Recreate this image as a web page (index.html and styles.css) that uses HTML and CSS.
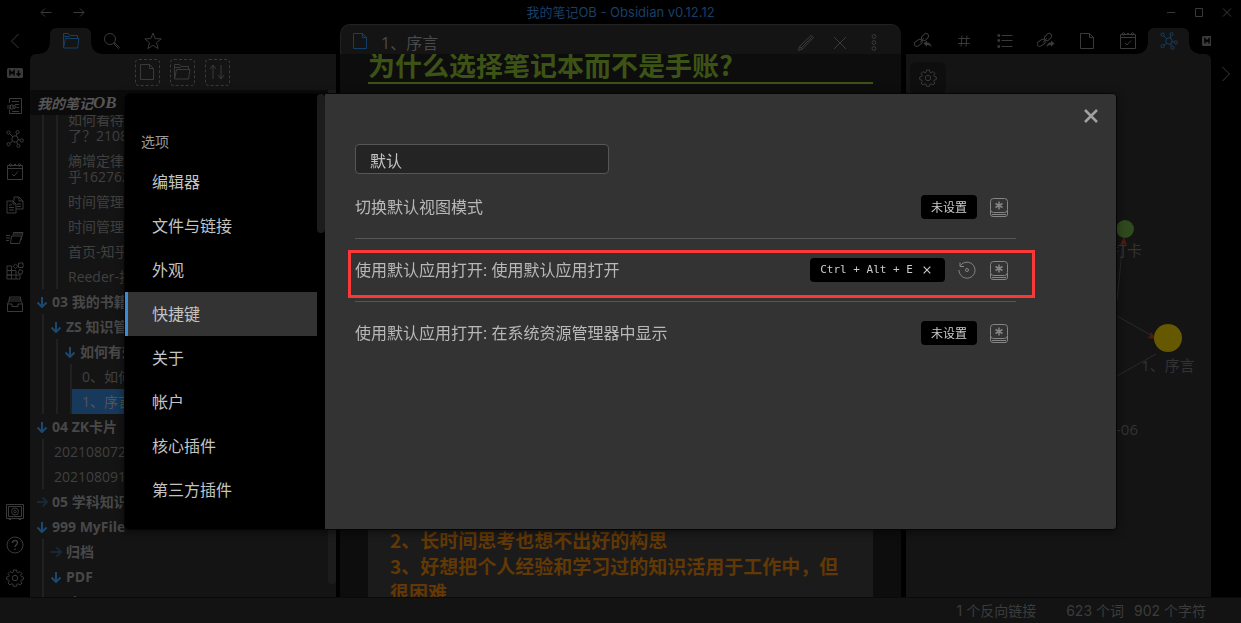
FILE: index.html
```html
<!DOCTYPE html>
<html lang="zh-CN">
<head>
<meta charset="utf-8">
<title>我的笔记OB - Obsidian v0.12.12</title>
<link rel="stylesheet" href="styles.css">
</head>
<body>
<svg class="sprite" aria-hidden="true">
  <symbol id="left" viewBox="0 0 18 18"><path d="M12.500 2 5.500 9l7 7"/></symbol>
  <symbol id="right" viewBox="0 0 18 18"><path d="M5.500 2l7 7-7 7"/></symbol>
  <symbol id="folder" viewBox="0 0 18 18"><path d="M1.500 16V1.500h5L8 3.500h7.500v3M1.500 16 3.500 6.500H17L15.500 16ZM1.500 4.500h6"/></symbol>
  <symbol id="search" viewBox="0 0 18 18"><circle cx="7" cy="7" r="5.500"/><path d="m11 11 1 0 4.500 4.500-1 1L11 12Z"/></symbol>
  <symbol id="star" viewBox="0 0 18 18"><path d="m9 1 2.200 5.600 6 .3-4.700 3.800 1.600 5.900L9 13.300l-5.100 3.300 1.600-5.900L.8 6.900l6-.3Z"/></symbol>
  <symbol id="file" viewBox="0 0 18 18"><path d="M2.500 1.500h9l4 4v11h-13ZM11.500 1.500v4h4"/></symbol>
  <symbol id="sort" viewBox="0 0 18 18"><path d="M5 16V2M2 6l3-4 3 4M13 2v14M10 12l3 4 3-4"/></symbol>
  <symbol id="md" viewBox="0 0 18 18"><rect x="1" y="4" width="16" height="10" rx="1.500" fill="currentColor" stroke="none"/><path d="M4 11.500V7l2 2.300L8 7v4.500M12.500 6.500v4M10.500 9.500l2 2 2-2" stroke="#000" stroke-width="1.500"/></symbol>
  <symbol id="template" viewBox="0 0 18 18"><path d="M3.500 6V1.500h12v15h-12v-4M6 4.500h7M9 7.500h4M11 10.500h2M6 14.500h7M1 9h3M1 11h3M4.500 8h2.500v4H4.500ZM8 8l2.500 2L8 12Z"/></symbol>
  <symbol id="graph" viewBox="0 0 18 18"><circle cx="9" cy="9" r="3.200"/><circle cx="2.500" cy="2.500" r="1.600"/><circle cx="11.500" cy="2.200" r="1.600"/><circle cx="15.800" cy="10.500" r="1.600"/><circle cx="2.500" cy="14.200" r="1.600"/><circle cx="12.500" cy="15.800" r="1.600"/><path d="m3.700 3.700 3 3M10 6l.8-2.300M12.200 9.600l2 .5M6.700 11.200l-3 2M10.500 12l1.300 2.300"/></symbol>
  <symbol id="calendar" viewBox="0 0 18 18"><path d="M1.500 2.500h15v14h-15ZM1.500 5.500h15M8 1.500h2M6 11l2 2 4-4.500"/><circle cx="4.500" cy="2" r="1.200"/><circle cx="13.500" cy="2" r="1.200"/></symbol>
  <symbol id="copy" viewBox="0 0 18 18"><path d="M1 5h6l3 3v9H1ZM7 5v3h3M8 5V1h5l4 4v8h-7M13 1v4h4M3 9h3M3 11.500h5M3 14h5M11 8h4M11 10.500h4"/></symbol>
  <symbol id="cards" viewBox="0 0 18 18"><path d="M5.500 7h10l-2 7.500h-9ZM7 6.500l.7-3H17L15 11M0 6.500h4M0 9h4M0 11.500h3M8 5h8"/></symbol>
  <symbol id="blocks" viewBox="0 0 18 18"><path d="M1 4h4.500v4.500H1ZM1 8.500h4.500V13H1ZM1 13h4.500v4H1ZM5.500 8.500H10V17H5.500M5.500 13h8.500v4h-4M12.500 1H17v4.500h-4.500ZM9.500 2l2.300 2.300L9.500 6.600 7.200 4.300ZM13.500 7.500 17 9l-1.500 3.500L12 11Z"/></symbol>
  <symbol id="archive" viewBox="0 0 18 18"><path d="M1.500 9h4.500v2.500h6V9h4.500v7.500h-15ZM1.500 9 3 6h12l1.500 3M3 6V4h12v2M3.500 4V2h11v2"/></symbol>
  <symbol id="safe" viewBox="0 0 18 18"><path d="M.5 1.500h17v14H.500ZM2.500 3.500h13v10h-13ZM3 15.500v1h2v-1M13 15.500v1h2v-1"/><circle cx="9" cy="8.500" r="3.500"/><circle cx="9" cy="8.500" r="1.300"/></symbol>
  <symbol id="help" viewBox="0 0 18 18"><circle cx="9" cy="9" r="8"/><path d="M6.500 7c0-3.300 5-3.300 5 0 0 1.800-2.500 2-2.500 4M9 12.500V14" stroke-width="1.400"/></symbol>
  <symbol id="gear" viewBox="0 0 18 18"><circle cx="9" cy="9" r="2.700"/><path d="M7.500 1h3l.4 2.200 1.300.6L14 2.500 16 4.500l-1.300 1.800.6 1.300 2 .4v2.500l-2 .5-.6 1.300L16 14l-2 2-1.800-1.200-1.300.5-.4 2h-3l-.4-2-1.300-.5L4 16l-2-2 1.300-1.700-.6-1.300-2-.5V8l2-.4.6-1.300L2 4.500l2-2 1.800 1.300 1.300-.6Z"/></symbol>
  <symbol id="pencil" viewBox="0 0 18 18"><path d="m1.500 16.500 1-4L14 1.500l2.500 2L5.500 15ZM2.500 12.500l3 2.500M4 14 14.500 3.500"/></symbol>
  <symbol id="cross" viewBox="0 0 18 18"><path d="m3 3 12 12M15 3 3 15"/></symbol>
  <symbol id="dots" viewBox="0 0 18 18"><circle cx="9" cy="2.500" r="1.900"/><circle cx="9" cy="8.500" r="1.900"/><circle cx="9" cy="14.500" r="1.900"/></symbol>
  <symbol id="links" viewBox="0 0 18 18"><rect x="7" y="2.500" width="8" height="5" rx="2.500" transform="rotate(-48 11 5)"/><rect x="0" y="8.500" width="8.500" height="5" rx="2.500" transform="rotate(-35 4 11)"/><path d="m6 10.500 4-4.500"/><path d="M9.500 11.500 13 8.500v2c3 0 4.500 2 4.500 5-1-2-2.500-2.500-4.500-2.500v1.800Z" fill="currentColor" stroke="none"/></symbol>
  <symbol id="outlinks" viewBox="0 0 18 18"><rect x="7" y="2.500" width="8" height="5" rx="2.500" transform="rotate(-48 11 5)"/><rect x="0" y="8.500" width="8.500" height="5" rx="2.500" transform="rotate(-35 4 11)"/><path d="m6 10.500 4-4.500"/><path d="M17.500 11.500 14 8.500v2c-3 0-4.500 2-4.500 5 1-2 2.500-2.500 4.500-2.500v1.800Z" fill="currentColor" stroke="none"/></symbol>
  <symbol id="hash" viewBox="0 0 18 18"><path d="M7 3.500 6 14.500M12 3.500l-1 11M3.500 6.500h11.500M3 11.500h11.500"/></symbol>
  <symbol id="list" viewBox="0 0 18 18"><path d="M5.500 3.500h11M5.500 8.500h11M5.500 14.500h11"/><path d="M1.500 3.500h2.500M1.500 8.500h2.500M1.500 14.500h2.500" stroke-width="2.500"/></symbol>
  <symbol id="arrow" viewBox="0 0 12 12"><path d="M6 1v10M1.500 6.500 6 11l4.500-4.500"/></symbol>
  <symbol id="key" viewBox="0 0 20 20"><rect x="1.500" y="1.500" width="17" height="14" rx="3"/><path d="M1.500 13v4a2.500 2.500 0 0 0 2.500 2.500h12a2.500 2.500 0 0 0 2.500-2.500v-4M3 17.500h14"/><path d="M10 4.500v8M6.500 6.500l7 4M13.500 6.500l-7 4" stroke-width="1.500"/></symbol>
  <symbol id="restore" viewBox="0 0 20 20"><path d="M3.500 5.500A8 8 0 1 1 2 10"/><path d="M3 2.500v4h4"/><circle cx="10" cy="10" r="1.500"/></symbol>
</svg>

<div class="app">
  <header class="titlebar">
    <nav class="history">
      <button aria-label="后退"><svg viewBox="0 0 12 10"><path d="M11.500 5.500H1M5 1.500 1 5.500l4 4"/></svg></button>
      <button aria-label="前进"><svg viewBox="0 0 12 10"><path d="M.5 5.500H11M7 1.500l4 4-4 4"/></svg></button>
    </nav>
    <div class="title">我的笔记OB - Obsidian v0.12.12</div>
    <div class="window-controls">
      <button aria-label="最小化"><svg viewBox="0 0 10 10"><path d="M1 5.500h8"/></svg></button>
      <button aria-label="最大化"><svg viewBox="0 0 10 10"><path d="M1.500 1.500h7v8h-7Z"/></svg></button>
      <button aria-label="关闭"><svg viewBox="0 0 10 10"><path d="m1 1.500 8 8M9 1.500l-8 8"/></svg></button>
    </div>
  </header>

  <main class="workspace">
    <nav class="ribbon">
      <button class="collapse" aria-label="折叠"><svg><use href="#left"/></svg></button>
      <button aria-label="Markdown"><svg><use href="#md"/></svg></button>
      <button aria-label="模板"><svg><use href="#template"/></svg></button>
      <button aria-label="关系图谱"><svg><use href="#graph"/></svg></button>
      <button aria-label="日记"><svg><use href="#calendar"/></svg></button>
      <button aria-label="复制"><svg><use href="#copy"/></svg></button>
      <button aria-label="卡片"><svg><use href="#cards"/></svg></button>
      <button aria-label="插件"><svg><use href="#blocks"/></svg></button>
      <button aria-label="归档"><svg><use href="#archive"/></svg></button>
      <button class="push" aria-label="仓库"><svg><use href="#safe"/></svg></button>
      <button aria-label="帮助"><svg><use href="#help"/></svg></button>
      <button aria-label="设置"><svg><use href="#gear"/></svg></button>
    </nav>

    <aside class="side side-left">
      <div class="tabs">
        <button class="tab active" aria-label="文件"><svg><use href="#folder"/></svg></button>
        <button class="tab" aria-label="搜索"><svg><use href="#search"/></svg></button>
        <button class="tab" aria-label="星标"><svg><use href="#star"/></svg></button>
      </div>
      <div class="panel">
        <div class="tools">
          <button aria-label="新建笔记"><svg><use href="#file"/></svg></button>
          <button aria-label="新建文件夹"><svg><use href="#folder"/></svg></button>
          <button aria-label="排序"><svg><use href="#sort"/></svg></button>
        </div>
        <div class="explorer">
          <div class="files">
            <div class="vault">我的笔记<em>OB</em></div>
            <ul class="tree">
              <li><ul><li><ul>
                <li class="leaf">如何看待熵增<br>了？2108</li>
                <li class="leaf">熵增定律-知<br>乎1627621</li>
                <li class="leaf">时间管理_</li>
                <li class="leaf">时间管理系</li>
                <li class="leaf">首页-知乎</li>
                <li class="leaf">Reeder-技</li>
              </ul></li></ul></li>
              <li><div class="folder"><svg><use href="#arrow"/></svg>03 我的书籍</div>
                <ul><li><div class="folder"><svg><use href="#arrow"/></svg>ZS 知识管理</div>
                  <ul><li><div class="folder"><svg><use href="#arrow"/></svg>如何有效</div>
                    <ul><li class="leaf">0、如何</li><li class="leaf selected">1、序言</li></ul>
                  </li></ul>
                </li></ul>
              </li>
              <li><div class="folder"><svg><use href="#arrow"/></svg>04 ZK卡片</div>
                <ul><li class="leaf">202108072</li><li class="leaf">202108091</li></ul>
              </li>
              <li><div class="folder closed"><svg><use href="#arrow"/></svg>05 学科知识</div></li>
              <li><div class="folder"><svg><use href="#arrow"/></svg>999 MyFile</div>
                <ul>
                  <li><div class="folder closed"><svg><use href="#arrow"/></svg>归档</div></li>
                  <li><div class="folder"><svg><use href="#arrow"/></svg>PDF</div></li>
                  <li><div class="folder"><svg><use href="#arrow"/></svg>zip</div></li>
                </ul>
              </li>
            </ul>
          </div>
          <div class="scrollbar"></div>
        </div>
      </div>
    </aside>

    <section class="editor">
      <header class="note-header">
        <svg class="note-icon"><use href="#file"/></svg>
        <span class="note-title">1、序言</span>
        <button aria-label="编辑"><svg><use href="#pencil"/></svg></button>
        <button aria-label="关闭"><svg><use href="#cross"/></svg></button>
        <button aria-label="更多"><svg><use href="#dots"/></svg></button>
      </header>
      <article class="note">
        <h1>为什么选择笔记本而不是手账?</h1>
        <div class="quote">
          <p>2、长时间思考也想不出好的构思</p>
          <p>3、好想把个人经验和学习过的知识活用于工作中，但很困难</p>
        </div>
      </article>
    </section>

    <aside class="side side-right">
      <div class="tabs">
        <button class="tab" aria-label="反向链接"><svg><use href="#links"/></svg></button>
        <button class="tab" aria-label="标签"><svg><use href="#hash"/></svg></button>
        <button class="tab" aria-label="大纲"><svg><use href="#list"/></svg></button>
        <button class="tab" aria-label="出链"><svg><use href="#outlinks"/></svg></button>
        <button class="tab" aria-label="文件"><svg><use href="#file"/></svg></button>
        <button class="tab" aria-label="日历"><svg><use href="#calendar"/></svg></button>
        <button class="tab active" aria-label="局部图谱"><svg><use href="#graph"/></svg></button>
        <button class="tab" aria-label="Markdown"><svg><use href="#md"/></svg></button>
      </div>
      <div class="panel graph-panel">
        <button class="graph-settings" aria-label="图谱设置"><svg><use href="#gear"/></svg></button>
        <svg class="graph" viewBox="0 0 305 499" preserveAspectRatio="xMaxYMin meet">
          <path class="edge" d="M211 202 217 144M211 218 250 240M211 278 250 256"/>
          <path class="tip" d="M218 139l3 8-3-1-4 1ZM250 241l-9-1 3-2 1-4Z"/>
          <circle cx="219" cy="131" r="9" fill="#2f4a1d"/>
          <circle cx="262" cy="240" r="14" fill="#665800"/>
          <text x="236" y="158" text-anchor="end">打卡</text>
          <text x="262" y="273" text-anchor="middle">1、序言</text>
          <text x="232" y="337" text-anchor="end">-06</text>
        </svg>
      </div>
    </aside>

    <nav class="ribbon ribbon-right">
      <button aria-label="折叠"><svg><use href="#right"/></svg></button>
    </nav>
  </main>

  <footer class="status">
    <span class="backlinks">1 个反向链接</span>
    <span>623 个词</span>
    <span>902 个字符</span>
  </footer>
</div>

<div class="overlay">
  <div class="modal" role="dialog" aria-label="设置">
    <nav class="menu">
      <div class="menu-list">
        <div class="menu-title">选项</div>
        <button>编辑器</button>
        <button>文件与链接</button>
        <button>外观</button>
        <button class="current">快捷键</button>
        <button>关于</button>
        <button>帐户</button>
        <button>核心插件</button>
        <button>第三方插件</button>
      </div>
      <div class="menu-scroll"></div>
    </nav>
    <div class="content">
      <button class="close" aria-label="关闭"><svg><use href="#cross"/></svg></button>
      <input type="text" class="filter" value="默认" aria-label="过滤">
      <div class="setting">
        <span class="name">切换默认视图模式</span>
        <span class="hotkey">未设置</span>
        <button class="icon" aria-label="自定义"><svg><use href="#key"/></svg></button>
      </div>
      <div class="setting marked">
        <span class="name">使用默认应用打开: 使用默认应用打开</span>
        <span class="hotkey combo">Ctrl + Alt + E<button aria-label="删除快捷键"><svg><use href="#cross"/></svg></button></span>
        <button class="icon" aria-label="恢复默认"><svg><use href="#restore"/></svg></button>
        <button class="icon" aria-label="自定义"><svg><use href="#key"/></svg></button>
      </div>
      <div class="setting">
        <span class="name">使用默认应用打开: 在系统资源管理器中显示</span>
        <span class="hotkey">未设置</span>
        <button class="icon" aria-label="自定义"><svg><use href="#key"/></svg></button>
      </div>
    </div>
  </div>
</div>
</body>
</html>
```

FILE: styles.css
```css
* { box-sizing: border-box; }
body {
  margin: 0;
  background: #000;
  color: #444;
  font: 14px/16px "Open Sans", "Noto Sans CJK SC", sans-serif;
  overflow: hidden;
}
button {
  display: flex;
  align-items: center;
  justify-content: center;
  flex: none;
  padding: 0;
  border: 0;
  background: none;
  color: inherit;
  font: inherit;
}
svg {
  display: block;
  flex: none;
  width: 18px;
  height: 18px;
  fill: none;
  stroke: currentColor;
  stroke-width: 1;
}
ul { list-style: none; margin: 0; padding: 0; }
.sprite { position: absolute; width: 0; height: 0; }

.app { display: flex; flex-direction: column; height: 100vh; }

/* Title bar */
.titlebar {
  display: grid;
  grid-template-columns: 1fr auto 1fr;
  align-items: center;
  height: 24px;
  color: #3a3a3a;
}
.history { display: flex; gap: 21px; padding-left: 40px; }
.history svg { width: 12px; height: 10px; }
.title { color: #173f68; font: 13px/16px Inter, "Noto Sans CJK SC", sans-serif; }
.window-controls { display: flex; justify-content: flex-end; gap: 18px; padding-right: 9px; }
.window-controls svg { width: 10px; height: 10px; }

/* Workspace */
.workspace {
  flex: 1;
  min-height: 0;
  display: grid;
  grid-template-columns: 30px 306px minmax(0, 1fr) 305px 30px;
}
.ribbon {
  display: flex;
  flex-direction: column;
  align-items: center;
  gap: 15px;
  padding: 8px 0 10px;
  color: #3a3a3a;
}
.ribbon .collapse { margin-bottom: -1px; }
.ribbon .push { margin-top: auto; }
.ribbon-right { padding-top: 41px; }

.side { display: flex; flex-direction: column; min-width: 0; min-height: 0; }
.tabs { display: flex; height: 30px; padding-top: 4px; color: #3a3a3a; overflow: hidden; flex: none; }
.side-left .tabs { padding-left: 20px; }
.side-right .tabs { margin-left: -4px; }
.tab { width: 41px; height: 26px; }
.tab.active {
  position: relative;
  border-radius: 6px 6px 0 0;
  background: #141414;
  color: #143f66;
}
.tab.active::before, .tab.active::after {
  content: "";
  position: absolute;
  bottom: 0;
  width: 10px;
  height: 10px;
}
.tab.active::before { right: 100%; background: radial-gradient(circle at 0 0, transparent 9px, #141414 10px); }
.tab.active::after { left: 100%; background: radial-gradient(circle at 100% 0, transparent 9px, #141414 10px); }
.panel { flex: 1; min-height: 0; display: flex; flex-direction: column; background: #141414; }
.side-left .panel { border-radius: 6px 0 0 0; }
.side-right .panel { border-radius: 0 6px 0 0; }

.tools { display: flex; justify-content: center; align-items: center; gap: 10px; height: 36px; flex: none; padding-right: 2px; color: #3a3a3a; }
.tools button { width: 25px; height: 27px; border: 1px dashed #3a3a3a; border-radius: 4px; }

.explorer { flex: 1; min-height: 0; display: flex; }
.files { flex: 1; overflow: hidden; white-space: nowrap; }
.vault {
  position: relative;
  display: flex;
  align-items: center;
  height: 25px;
  padding-left: 7px;
  background: #0b0b0b;
  color: #555;
  font: italic bold 14px/24px "Noto Sans CJK SC", sans-serif;
}
.vault em { font: italic bold 17px/24px "Liberation Serif", serif; }
.scrollbar { width: 8px; height: 494px; max-height: 98%; border-radius: 0 0 4px 4px; background: #1c1c1c; }
.tree { margin-top: -8px; }
.tree ul { margin-left: 12px; border-left: 2px solid #212121; }
.leaf { padding: 5px 0 4px 10px; color: #404040; }
.leaf.selected { background: #16395c; color: #555; }
.folder {
  display: flex;
  align-items: center;
  gap: 4px;
  height: 25px;
  padding-left: 6px;
  color: #484848;
  font-weight: bold;
}
.folder svg { width: 12px; height: 12px; color: #1c4870; stroke-width: 2; }
.folder.closed svg { transform: rotate(-90deg); color: #182838; }

/* Editor */
.editor { display: flex; flex-direction: column; min-width: 0; min-height: 0; margin: 0 5px 0 4px; }
.note-header {
  display: flex;
  align-items: center;
  gap: 16px;
  height: 30px;
  flex: none;
  padding: 2px 18px 0 10px;
  border: 1px solid #222;
  border-width: 1px 0 0 1px;
  border-radius: 10px 10px 0 0;
  background: #141414;
  color: #3a3a3a;
}
.note-icon { color: #143f66; }
.note-title { flex: 1; margin-left: -4px; color: #4a4a4a; font-size: 16px; line-height: 24px; padding-top: 5px; }
.note-header button { padding-top: 4px; }
.note {
  flex: 1;
  min-height: 0;
  display: flex;
  flex-direction: column;
  padding: 0 28px;
  background: #0d0d0d;
  overflow: hidden;
}
h1 {
  flex: none;
  margin: -6px 0 0;
  height: 36px;
  border-bottom: 2px solid #3c5315;
  color: #3c5315;
  font: bold 27px/34px "Noto Sans CJK SC", sans-serif;
}
.quote {
  flex: none;
  margin: auto 0 -8px;
  padding: 60px 22px 0;
  background: #1b1b1b;
  color: #623805;
  font: bold 19px/26px "Noto Sans CJK SC", sans-serif;
}
.quote p { margin: 0; }

/* Graph */
.graph-settings { width: 36px; height: 32px; margin: 8px 0 4px 4px; border-radius: 6px; background: #0e0e0e; color: #3a3a3a; }
.graph { width: 100%; height: auto; stroke: none; }
.graph .edge { stroke: #292929; }
.graph .tip { fill: #4e1b10; }
.graph text { fill: #333; font: 15px "Open Sans", "Noto Sans CJK SC", sans-serif; }

.status {
  display: flex;
  justify-content: flex-end;
  align-items: center;
  gap: 10px;
  height: 26px;
  padding: 0 35px 0 0;
  border-top: 1px solid #0a0a0a;
  background: #131313;
  color: #3c3c3c;
  font: 14px/20px Inter, "Noto Sans CJK SC", sans-serif;
}
.backlinks { margin-right: 20px; }

/* Settings dialog */
.overlay { position: fixed; inset: 0; display: flex; align-items: center; justify-content: center; }
.modal {
  display: flex;
  width: 80%;
  height: 70%;
  border: 1px solid #050505;
  border-radius: 4px;
  background: #333;
  box-shadow: 0 2px 8px rgba(0, 0, 0, .5);
  color: #c4c4c4;
  font-size: 16px;
  line-height: 24px;
  overflow: hidden;
}
.menu { display: flex; width: 200px; flex: none; background: #000; }
.menu-list { flex: 1; padding-top: 30px; }
.menu-title { padding: 6px 16px; color: #999; font-size: 14px; }
.menu button { justify-content: flex-start; width: 100%; height: 44px; padding-left: 24px; border-left: 3px solid transparent; }
.menu button.current { border-left-color: #3a8ad8; background: #333; }
.menu-scroll { width: 8px; height: 139px; border-radius: 4px; background: #1c1c1c; }
.content { position: relative; flex: 1; padding: 50px 100px 0 30px; }
.close { position: absolute; top: 13px; right: 16px; color: #a0a0a0; }
.close svg { stroke-width: 2.500; }
.filter {
  display: block;
  width: 254px;
  height: 30px;
  margin: 0;
  padding: 2px 14px 0;
  border: 1px solid #565656;
  border-radius: 4px;
  background: #242424;
  color: #c4c4c4;
  font: inherit;
}
.setting { position: relative; display: flex; align-items: center; gap: 12px; height: 64px; padding: 2px 7px 0 0; color: #b8b8b8; }
.setting + .setting { height: 63px; border-top: 1px solid #555; padding-top: 0; }
.name { flex: 1; }
.hotkey {
  display: flex;
  align-items: center;
  height: 24px;
  padding: 0 10px;
  border-radius: 4px;
  background: #000;
  color: #ccc;
  font: 12px/24px "Noto Sans CJK SC", sans-serif;
}
.combo { gap: 6px; font: 11px/24px "DejaVu Sans Mono", monospace; }
.hotkey svg { width: 10px; height: 10px; stroke-width: 2; }
.hotkey button { width: 16px; }
.icon { color: #858585; }
.icon svg { width: 20px; height: 20px; }
.marked::after {
  content: "";
  position: absolute;
  inset: 11px -19px 3px -7px;
  border: 3px solid #fb3838;
  pointer-events: none;
}
```
